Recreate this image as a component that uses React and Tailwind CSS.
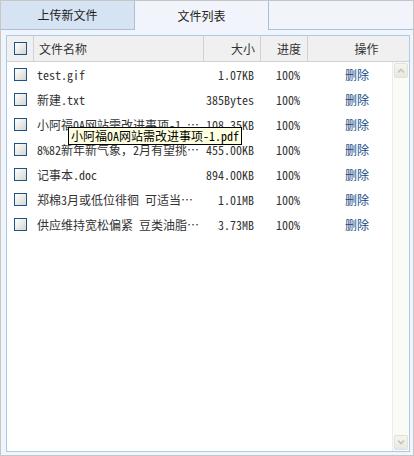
import React from 'react';

const files = [
  { name: 'test.gif', size: '1.07KB' },
  { name: '新建.txt', size: '385Bytes' },
  { name: '小阿福0A网站需改进事项-1 …', size: '108.35KB' },
  { name: '8%82新年新气象，2月有望挑…', size: '455.00KB' },
  { name: '记事本.doc', size: '894.00KB' },
  { name: '郑棉3月或低位徘徊 可适当…', size: '1.01MB' },
  { name: '供应维持宽松偏紧 豆类油脂…', size: '3.73MB' },
];

const mono = "font-['Noto_Sans_Mono_CJK_SC','Liberation_Mono','Noto_Sans_CJK_SC',monospace]";

function Check() {
  return (
    <span className="block w-[13px] h-[13px] border border-[#1d5488] bg-gradient-to-br from-white to-[#d6d6cf]" />
  );
}

function Tab({ active, children }) {
  return (
    <div
      className={
        active
          ? 'w-[134px] h-[29px] flex items-center justify-center bg-[#f1f5fb] border-r border-[#a9c0dc] text-[#222]'
          : 'w-[134px] h-[29px] flex items-center justify-center bg-[#d6e3f3] border-r border-b border-[#a9c0dc] text-[#222]'
      }
    >
      {children}
    </div>
  );
}

export default function App() {
  return (
    <div className="w-[414px] h-[456px] border border-[#c6c6c6] bg-[#f1f5fb] flex flex-col text-[12px] font-['Noto_Sans_CJK_SC',sans-serif] text-[#333]">
      {/* tabs */}
      <div className="flex h-[29px] shrink-0">
        <Tab>上传新文件</Tab>
        <Tab active>文件列表</Tab>
        <div className="flex-1 border-b border-[#a9c0dc]" />
      </div>

      {/* file table */}
      <div className="relative flex-1 ml-[5px] mr-[3px] mt-[5px] mb-[3px] border border-[#a9cbef] bg-white flex flex-col">
        <div className="flex h-[26px] shrink-0 bg-[#f0f0f0] border-b border-[#d2d2d2]">
          <div className="w-[27px] border-r border-[#d2d2d2] flex items-center justify-center">
            <Check />
          </div>
          <div className="w-[170px] border-r border-[#d2d2d2] flex items-center pl-[5px]">文件名称</div>
          <div className="w-[57px] border-r border-[#d2d2d2] flex items-center justify-end pr-[5px]">大小</div>
          <div className="w-[47px] border-r border-[#d2d2d2] flex items-center justify-end pr-[6px]">进度</div>
          <div className="flex-1 flex items-center justify-center pl-[16px]">操作</div>
        </div>

        <div className="flex flex-1 min-h-0">
          <div className="flex-1">
            {files.map((f) => (
              <div key={f.name} className="flex h-[25px] items-center">
                <div className="w-[27px] flex justify-center">
                  <Check />
                </div>
                <div className={`w-[170px] pl-[3px] whitespace-nowrap overflow-hidden ${mono}`}>{f.name}</div>
                <div className={`w-[57px] text-right pr-[7px] ${mono}`}>{f.size}</div>
                <div className={`w-[47px] text-right pr-[8px] ${mono}`}>100%</div>
                <div className="flex-1 pl-[37px]">
                  <a className="text-[#164a86] cursor-pointer">删除</a>
                </div>
              </div>
            ))}
          </div>

          {/* scrollbar */}
          <div className="w-[17px] bg-[#fbfbf5] border-l border-[#ececec] flex flex-col justify-between items-center py-[1px]">
            <div className="w-[14px] h-[15px] rounded-[2px] border border-[#e2e2da] bg-gradient-to-b from-[#f6f6f0] to-[#e8e8e0] flex items-center justify-center">
              <svg width="8" height="5" viewBox="0 0 8 5">
                <path d="M1 4.5 L4 1.5 L7 4.5" fill="none" stroke="#c4c4bc" strokeWidth="1.6" />
              </svg>
            </div>
            <div className="w-[14px] h-[15px] rounded-[2px] border border-[#e2e2da] bg-gradient-to-b from-[#f6f6f0] to-[#e8e8e0] flex items-center justify-center">
              <svg width="8" height="5" viewBox="0 0 8 5">
                <path d="M1 0.5 L4 3.5 L7 0.5" fill="none" stroke="#c4c4bc" strokeWidth="1.6" />
              </svg>
            </div>
          </div>
        </div>

        {/* hover tooltip */}
        <div className={`absolute left-[61px] top-[91px] h-[18px] px-[2px] flex items-center bg-[#ffffe1] border border-black text-black whitespace-nowrap ${mono}`}>
          小阿福0A网站需改进事项-1.pdf
        </div>
      </div>
    </div>
  );
}
